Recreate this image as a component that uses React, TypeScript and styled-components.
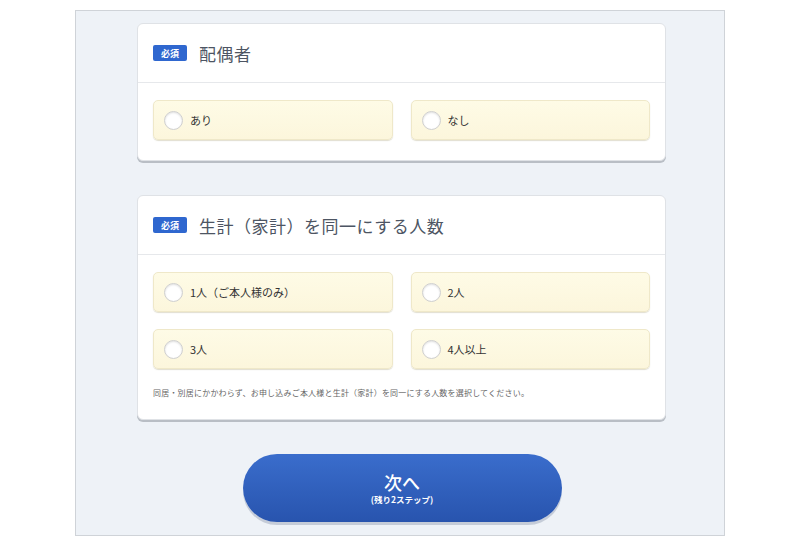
import React from "react";
import styled, {createGlobalStyle} from "styled-components";

const GlobalStyle = createGlobalStyle`
    body {
        margin: 0;
        background: #fff;
        font-family: "Noto Sans CJK JP", "Noto Sans", sans-serif;
    }
`;

const Page = styled.div`
    padding-top: 10px;
    padding-left: 75px;
    width: 650px;
`;

const Panel = styled.div`
    background: #eef2f7;
    border: 1px solid #cfd3d8;
    padding: 12px 0 13px;
    display: flex;
    flex-direction: column;
    align-items: center;
    gap: 34px;
`;

const Card = styled.section`
    width: 529px;
    box-sizing: border-box;
    background: #fff;
    border: 1px solid #dfe2e6;
    border-radius: 6px;
    box-shadow: 0 2px 0 #b9bec5;
    margin-left: 3px;
`;

const CardHeader = styled.div`
    height: 58px;
    display: flex;
    align-items: center;
    gap: 12px;
    padding: 0 15px;
    border-bottom: 1px solid #e6e8eb;
`;

const Badge = styled.span`
    width: 34px;
    height: 16px;
    border-radius: 2px;
    background: #2f67cf;
    color: #fff;
    font-size: 9px;
    font-weight: 700;
    display: flex;
    align-items: center;
    justify-content: center;
    line-height: 1;
`;

const Title = styled.h2`
    margin: 0;
    font-size: 17px;
    font-weight: 400;
    color: #4d5563;
    letter-spacing: 0.5px;
`;

const CardBody = styled.div<{ $bottom: number }>`
    padding: 17px 15px ${p => p.$bottom}px;
`;

const OptionGrid = styled.div`
    display: grid;
    grid-template-columns: 1fr 1fr;
    column-gap: 18px;
    row-gap: 17px;
`;

const Option = styled.label`
    height: 40px;
    box-sizing: border-box;
    display: flex;
    align-items: center;
    gap: 7px;
    padding-left: 10px;
    background: linear-gradient(#fefbe6, #fcf6dc);
    border: 1px solid #efe8c9;
    border-radius: 5px;
    box-shadow: 0 1px 1px rgba(170, 160, 120, 0.35);
    font-size: 11px;
    color: #333;
    cursor: pointer;
`;

const Radio = styled.span`
    width: 17px;
    height: 17px;
    border-radius: 50%;
    background: #fff;
    border: 1px solid #cfcfcf;
    box-shadow: inset 0 1px 2px rgba(0, 0, 0, 0.12);
`;

const Note = styled.p`
    margin: 18px 0 0;
    font-size: 8px;
    color: #666;
    letter-spacing: 0.2px;
`;

const NextButton = styled.button`
    width: 319px;
    height: 68px;
    border: none;
    border-radius: 34px;
    background: linear-gradient(#3a6dcc, #2854ae);
    box-shadow: 0 3px 0 #c5ccd8;
    color: #fff;
    font-family: inherit;
    display: flex;
    flex-direction: column;
    align-items: center;
    justify-content: center;
    gap: 2px;
    margin-left: 4px;
    cursor: pointer;
`;

const ButtonMain = styled.span`
    font-size: 18px;
    font-weight: 500;
    line-height: 20px;
`;

const ButtonSub = styled.span`
    font-size: 8.5px;
    font-weight: 700;
    line-height: 11px;
`;

const Choice = ({label}: { label: string }) => (
    <Option>
      <Radio/>
      {label}
    </Option>
);

export default function App() {
  return (
      <Page>
        <GlobalStyle/>
        <Panel>
          <Card>
            <CardHeader>
              <Badge>必須</Badge>
              <Title>配偶者</Title>
            </CardHeader>
            <CardBody $bottom={20}>
              <OptionGrid>
                <Choice label="あり"/>
                <Choice label="なし"/>
              </OptionGrid>
            </CardBody>
          </Card>
          <Card>
            <CardHeader>
              <Badge>必須</Badge>
              <Title>生計（家計）を同一にする人数</Title>
            </CardHeader>
            <CardBody $bottom={21}>
              <OptionGrid>
                <Choice label="1人（ご本人様のみ）"/>
                <Choice label="2人"/>
                <Choice label="3人"/>
                <Choice label="4人以上"/>
              </OptionGrid>
              <Note>同居・別居にかかわらず、お申し込みご本人様と生計（家計）を同一にする人数を選択してください。</Note>
            </CardBody>
          </Card>
          <NextButton>
            <ButtonMain>次へ</ButtonMain>
            <ButtonSub>(残り2ステップ)</ButtonSub>
          </NextButton>
        </Panel>
      </Page>
  );
}
